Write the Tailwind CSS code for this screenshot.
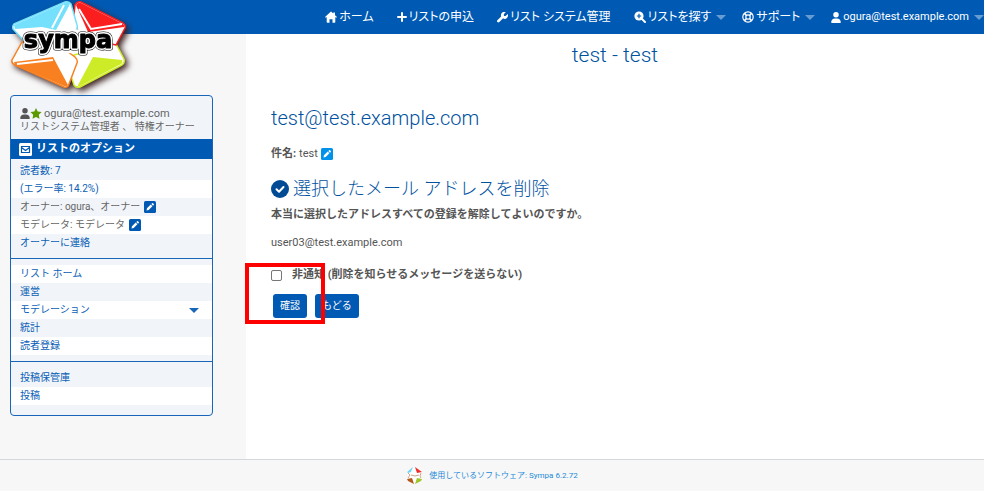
<!DOCTYPE html>
<html lang="ja">
<head>
  <meta charset="utf-8">
  <meta name="viewport" content="width=device-width, initial-scale=1">
  <title>test - test</title>
  <script src="https://cdn.jsdelivr.net/npm/@tailwindcss/browser@4"></script>
</head>
<body class="min-h-screen flex flex-col bg-white text-[#555] font-['Roboto','Noto_Sans_CJK_JP',sans-serif] text-[11px] leading-[18px]">

  <!-- shared shapes -->
  <svg class="hidden">
    <symbol id="user" viewBox="0 0 448 512"><path d="M224 256A128 128 0 1 0 224 0a128 128 0 1 0 0 256zm-46 48C80 304 0 384 0 482c0 17 13 30 30 30h388c17 0 30-13 30-30 0-98-80-178-178-178z"/></symbol>
    <symbol id="pen" viewBox="0 0 12 12"><rect width="12" height="12" rx="1.5"/><path fill="#fff" d="M2.5 9.5l.5-2.2 3.7-3.7 1.7 1.7-3.7 3.7zM7.3 3l.8-.8q.4-.3.8 0l.9.9q.3.4 0 .8l-.8.8z"/></symbol>
  </svg>

  <header class="relative h-[34px] bg-[#005ab3] text-white">
    <a href="#" class="absolute left-[11px] top-0 z-10" aria-label="sympa">
      <svg class="w-[120px] h-[94px] drop-shadow-[3px_3px_3px_#3b2020]" viewBox="0 0 120 94">
        <g fill="#fff" stroke-linejoin="round" stroke-width="1.5">
          <path stroke="none" d="M12 28h92l-4 15 4 15H12l4-15z"/>
          <path stroke="#cdec27" d="M104 42l9 17q1 4-2 6L69 87q-4 1-6-2L54 58z"/>
          <path stroke="#fb1e1e" d="M64 5q2-4 6-3l42 21q3 2 2 5l-9 17-34-8-9-14z"/>
          <path stroke="#74e0fc" d="M3 24L54 2q4-1 6 2l6 21q1 3-1 5l-9 14-42-2L2 29q-1-3 1-5z"/>
          <path stroke="#f98020" d="M11 42l42 7 11 8q3 3 2 6l-8 21q-1 4-5 3L4 65q-4-2-3-5z"/>
          <path stroke="none" d="M16 32l44-3 42 3-4 22-44-1-38-2z"/>
        </g>
        <path fill="#74e0fc" d="M3 25L56 2q4 0 2 4L45 30l-14-3-27 2z"/>
        <path fill="#fb1e1e" d="M65 5q2-3 5-2l42 21q2 2 1 3l-36 5z"/>
        <path fill="#f98020" d="M3 62l39-5 15 28q-2 2-4 1L4 65z"/>
        <path fill="#cdec27" d="M66 87l16-30 29 3q1 3-1 4L69 86z"/>
        <path fill="none" stroke="#fff" stroke-width="2" d="M53 5L41 28M68 9l12 20 31-5M42 60L6 64M79 57L66 83"/>
        <g text-anchor="middle" font-family="DejaVu Sans" font-weight="bold" font-size="24" stroke-linejoin="round">
          <text x="57" y="48" fill="#000" stroke="#000" stroke-width="5">sympa</text>
          <text x="57" y="48" fill="#fff" stroke="#fff" stroke-width="4">sympa</text>
          <text x="57" y="48" fill="#000" stroke="#000" stroke-width="1">sympa</text>
        </g>
      </svg>
    </a>
    <nav class="h-full flex items-center justify-end gap-[23px] whitespace-nowrap text-[12px] [font-feature-settings:'palt']">
      <a href="#" class="flex items-center gap-[2px]">
        <svg class="w-3 h-3" viewBox="0 0 12 12" fill="#fff"><path d="M6 .5L0 6l.8.8.9-.7V11q0 .7.7.7h2.1V8.3h3v3.4h2.1q.7 0 .7-.7V6.1l.9.7.8-.8-2-1.8V1.5H8.3v1.1z"/></svg>
        ホーム
      </a>
      <a href="#" class="flex items-center gap-[2px]">
        <svg class="w-[10px] h-[10px]" viewBox="0 0 10 10"><path stroke="#fff" stroke-width="2" stroke-linecap="round" d="M5 1v8M1 5h8"/></svg>
        リストの申込
      </a>
      <a href="#" class="flex items-center gap-[2px]">
        <svg class="w-[11px] h-[11px]" viewBox="0 0 512 512" fill="#fff"><path d="M352 320c88 0 160-72 160-160 0-15-2-30-6-44-3-11-17-14-25-6l-68 68c-3 3-7 5-11 5h-66c-9 0-16-7-16-16v-66c0-4 2-8 5-11l68-68c8-8 5-22-6-25-14-4-29-6-44-6-88 0-160 72-160 160 0 19 3 37 10 54L19 379a64 64 0 0 0 91 91l175-174c21 15 43 24 67 24z"/></svg>
        リスト システム管理
      </a>
      <a href="#" class="flex items-center gap-[2px]">
        <svg class="w-[12px] h-[12px]" viewBox="0 0 12 12"><circle cx="5" cy="5" r="4.6" fill="#fff"/><path stroke="#fff" stroke-width="2" stroke-linecap="round" d="M8 8l3 3"/><path stroke="#005ab3" stroke-width="1.2" d="M5 2.8v4.4M2.8 5h4.4"/></svg>
        リストを探す
        <span class="ml-[3px] border-x-[5px] border-t-[5px] border-x-transparent border-t-[#669cd1]"></span>
      </a>
      <a href="#" class="flex items-center gap-[2px] -ml-[7px]">
        <svg class="w-[12px] h-[12px]" viewBox="0 0 12 12" fill="none" stroke="#fff"><circle cx="6" cy="6" r="5.2" stroke-width="1.2"/><circle cx="6" cy="6" r="2.2" stroke-width="1.2"/><path stroke-width="1.8" d="M2.2 2.2l2 2M9.8 2.2l-2 2M2.2 9.8l2-2M9.8 9.8l-2-2"/></svg>
        サポート
        <span class="ml-[3px] border-x-[5px] border-t-[5px] border-x-transparent border-t-[#669cd1]"></span>
      </a>
      <a href="#" class="flex items-center gap-[2px] -ml-[7px] text-[11px]">
        <svg class="w-[10px] h-[11px]" fill="#fff"><use href="#user"/></svg>
        ogura@test.example.com
        <span class="ml-[3px] border-x-[5px] border-t-[5px] border-x-transparent border-t-[#669cd1]"></span>
      </a>
    </nav>
  </header>

  <div class="flex-1 flex">
    <aside class="w-1/4 bg-[#f7f7f7] pt-[61px] pl-[10px] pr-[33px]">
      <div class="border border-[#1766b8] rounded-[4px] bg-[#f1f5f9] overflow-hidden text-[10px] text-[#0a60b5]">
        <div class="px-[9px] pt-[11px] pb-[6px] leading-[13px] whitespace-nowrap text-[#666]">
          <div class="flex items-center text-[11px]">
            <svg class="w-[10px] h-[11px]" fill="#555"><use href="#user"/></svg>
            <svg class="w-[12px] h-[11px] mr-[2px]" viewBox="0 0 12 11" fill="#5a9a00"><path d="M6 0l1.7 3.5 3.9.6-2.8 2.7.7 3.9L6 8.900l-3.500 1.800.7-3.900L.4 4.100l3.900-.6z"/></svg>
            ogura@test.example.com
          </div>
          <div>リストシステム管理者 、 特権オーナー</div>
        </div>
        <h2 class="flex items-center gap-1 h-5 px-[8px] bg-[#005ab3] text-white text-[11px] font-bold">
          <svg class="w-[13px] h-[13px]" viewBox="0 0 13 13"><rect width="13" height="13" rx="1.5" fill="#fff"/><path fill="none" stroke="#005ab3" stroke-width="1.2" d="M2.500 3.500h8v6h-8zM2.500 4.500l4 3 4-3"/></svg>
          リストのオプション
        </h2>
        <ul class="pt-[3px] pb-[6px] *:px-[9px]">
          <li><a href="#">読者数: 7</a></li>
          <li class="bg-white"><a href="#">(エラー率: 14.2%)</a></li>
          <li class="flex items-center gap-1 text-[#666]">オーナー: ogura、オーナー <a href="#" aria-label="オーナーを編集"><svg class="w-3 h-3" fill="#005ab3"><use href="#pen"/></svg></a></li>
          <li class="flex items-center gap-1 bg-white text-[#666]">モデレータ: モデレータ <a href="#" aria-label="モデレータを編集"><svg class="w-3 h-3" fill="#005ab3"><use href="#pen"/></svg></a></li>
          <li><a href="#">オーナーに連絡</a></li>
        </ul>
        <ul class="border-t border-[#1766b8] py-[6px] *:px-[9px]">
          <li class="bg-white"><a href="#">リスト ホーム</a></li>
          <li><a href="#">運営</a></li>
          <li class="bg-white"><a href="#" class="flex items-center justify-between pr-1">モデレーション <span class="border-x-[5px] border-t-[5px] border-x-transparent border-t-[#1766b8]"></span></a></li>
          <li><a href="#">統計</a></li>
          <li class="bg-white"><a href="#">読者登録</a></li>
        </ul>
        <ul class="border-t border-[#1766b8] pt-[7px] pb-[10px] *:px-[9px]">
          <li><a href="#">投稿保管庫</a></li>
          <li class="bg-white"><a href="#">投稿</a></li>
        </ul>
      </div>
    </aside>

    <main class="flex-1 px-[25px]">
      <h1 class="mt-2 text-center text-[21px] leading-[26px] font-light text-[#00529f]">test - test</h1>
      <h2 class="mt-[36px] text-[20px] leading-[28px] font-light text-[#00529f]">test@test.example.com</h2>
      <p class="mt-[13px] flex items-center gap-[3px]"><b>件名:</b> test
        <a href="#" aria-label="件名を編集"><svg class="w-3 h-3" fill="#0091ea"><use href="#pen"/></svg></a>
      </p>
      <h3 class="mt-3 flex items-center gap-1 text-[18px] leading-[28px] font-light text-[#00529f]">
        <svg class="w-[18px] h-[18px]" viewBox="0 0 18 18"><circle cx="9" cy="9" r="9" fill="#004b94"/><path fill="none" stroke="#fff" stroke-width="2" stroke-linecap="round" stroke-linejoin="round" d="M5.500 9.300l2.500 2.400 4.500-4.700"/></svg>
        選択したメール アドレスを削除
      </h3>
      <p class="mt-[3px] font-bold">本当に選択したアドレスすべての登録を解除してよいのですか。</p>
      <p class="mt-[10px]">user03@test.example.com</p>
      <form class="relative mt-[14px]">
        <div class="flex items-center font-bold">
          <input type="checkbox" id="quiet" class="w-[11px] h-[11px] appearance-none border border-[#767676] rounded-[2px] bg-white mr-[10px]">
          <label for="quiet">非通知 (削除を知らせるメッセージを送らない)</label>
        </div>
        <div class="mt-[10px] ml-[2px] flex gap-2 text-[10px] text-white">
          <button type="submit" class="h-6 px-[7px] rounded-[3px] bg-[#005ab3]">確認</button>
          <button type="button" class="h-6 px-[7px] rounded-[3px] bg-[#005ab3]">もどる</button>
        </div>
        <div class="absolute -left-[26px] -top-[3px] w-[80px] h-[61px] border-4 border-[#f00] pointer-events-none"></div>
      </form>
    </main>
  </div>

  <footer class="h-8 flex items-center justify-center gap-[6px] border-t border-[#d5d8db] bg-[#f7f7f7] text-[8px] text-[#1c8ad8]">
    <svg class="w-[17px] h-[17px]" viewBox="0 0 17 17">
      <path fill="#fff" d="M1 4l7-4 8 4-1 4 1 5-8 4-7-4 1-5z"/>
      <path fill="#74d4f0" d="M1 5l6-5-2 5-3 1z"/>
      <path fill="#ee2c2c" d="M9 0l7 5-5 1z"/>
      <path fill="#b4581c" d="M1 12l5-1 2 6-6-3z"/>
      <path fill="#9fc52a" d="M9 17l2-6 5 1-1 2z"/>
      <path fill="none" stroke="#c08a6a" stroke-width=".8" d="M2 6l2 2-2 3M15 6l-1 3 1 2M5 8l4 1 4-1"/>
    </svg>
    <a href="#">使用しているソフトウェア: Sympa 6.2.72</a>
  </footer>
</body>
</html>
